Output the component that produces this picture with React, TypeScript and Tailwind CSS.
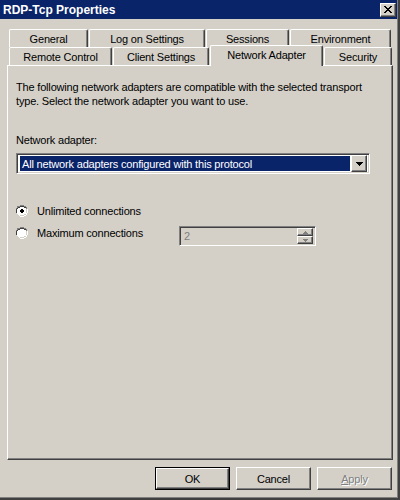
import React from 'react';

const raised =
  'border border-t-white border-l-white border-b-[#404040] border-r-[#404040] shadow-[inset_-1px_-1px_0_#808080,inset_1px_1px_0_#d4d0c8] bg-[#d4d0c8]';
const sunken =
  'border border-t-[#808080] border-l-[#808080] border-b-white border-r-white shadow-[inset_1px_1px_0_#404040,inset_-1px_-1px_0_#d4d0c8]';

function Tab({ label, w, selected = false }: { label: string; w: number; selected?: boolean }) {
  return (
    <div
      style={{ width: w }}
      className={`flex items-center justify-center bg-[#d4d0c8] border-t border-l border-white border-r border-r-[#404040] shadow-[inset_-1px_0_0_#808080] rounded-t-[2px] ${
        selected ? 'h-[21px] relative z-10 -mb-[1px] pb-[2px]' : 'h-[18px]'
      }`}
    >
      {label}
    </div>
  );
}

function Radio({ checked }: { checked?: boolean }) {
  return (
    <svg width="12" height="12" viewBox="0 0 12 12" shapeRendering="crispEdges">
      <circle cx="6" cy="6" r="5.5" fill="#ffffff" />
      <path d="M4 0h4v1h2v1h1v2h-1v-2h-2v-1h-4v1h-2v1h-1v4h-1v-4h1v-2h2z" fill="#808080" />
      <path d="M0 4h1v4h-1z" fill="#808080" />
      <path d="M4 1h4v1h2v1h-2v-1h-4v1h-2v1h-1v4h-1v-4h1v-1h1v-1h2z" fill="#404040" />
      <path d="M11 4h1v4h-1v2h-1v1h-2v1h-4v-1h4v-1h2v-2h1z" fill="#ffffff" />
      <path d="M10 4h1v4h-1v2h-2v1h-4v-1h4v-1h2z" fill="#d4d0c8" />
      {checked && <path d="M5 4h2v1h1v2h-1v1h-2v-1h-1v-2h1z" fill="#000000" />}
    </svg>
  );
}

export default function App() {
  return (
    <div className="w-[400px] h-[500px] bg-[#d4d0c8] border-r-2 border-b-2 border-r-[#404040] border-b-[#404040] shadow-[inset_-1px_-1px_0_#808080] flex flex-col text-[11px] tracking-[-0.18px] text-black font-['Liberation_Sans',Arial,sans-serif] leading-[14px] overflow-hidden">
      {/* Title bar */}
      <div className="h-[19px] bg-[#0a246a] flex items-center justify-between pl-[3px] pr-[1px] mr-[1px]">
        <span className="text-white font-bold text-[12px] tracking-normal">RDP-Tcp Properties</span>
        <div className={`w-[16px] h-[14px] flex items-center justify-center ${raised}`}>
          <svg width="8" height="7" viewBox="0 0 8 7" shapeRendering="crispEdges">
            <path d="M0 0h2v1h1v1h2v-1h1v-1h2v1h-1v1h-1v1h-1v1h1v1h1v1h1v1h-2v-1h-1v-1h-2v1h-1v1h-2v-1h1v-1h1v-1h1v-1h-1v-1h-1v-1h-1z" fill="#000" />
          </svg>
        </div>
      </div>

      {/* Tabs */}
      <div className="ml-[9px] mt-[10px] flex gap-[1px]">
        <Tab label="General" w={79} />
        <Tab label="Log on Settings" w={116} />
        <Tab label="Sessions" w={83} />
        <Tab label="Environment" w={101} />
      </div>
      <div className="ml-[9px] -mt-[3px] h-[21px] flex items-end gap-[1px] relative z-10">
        <Tab label="Remote Control" w={103} />
        <Tab label="Client Settings" w={96} />
        <Tab label="Network Adapter" w={113} selected />
        <Tab label="Security" w={68} />
      </div>

      {/* Panel */}
      <div className="ml-[7px] w-[386px] h-[395px] border border-t-white border-l-white border-r-[#404040] border-b-[#404040] shadow-[inset_-1px_-1px_0_#808080] pt-[14px] pl-[8px] flex flex-col">
        <p>
          The following network adapters are compatible with the selected transport
          <br />
          type. Select the network adapter you want to use.
        </p>
        <p className="mt-[25px]">Network adapter:</p>
        <div className={`mt-[6px] w-[354px] h-[21px] bg-white flex items-center p-[2px] ${sunken}`}>
          <div className="flex-1 h-[15px] mx-[1px] bg-[#0a246a] text-white flex items-center pl-[2px]">
            All network adapters configured with this protocol
          </div>
          <div className={`w-[16px] h-[17px] flex items-center justify-center ${raised}`}>
            <svg width="7" height="4" viewBox="0 0 7 4" shapeRendering="crispEdges">
              <path d="M0 0h7v1h-1v1h-1v1h-1v1h-1v-1h-1v-1h-1v-1h-1z" fill="#000" />
            </svg>
          </div>
        </div>

        <div className="mt-[30px] flex items-center gap-[9px] h-[14px]">
          <Radio checked />
          <span>Unlimited connections</span>
        </div>
        <div className="mt-[8px] flex items-start">
          <div className="flex items-center gap-[9px] h-[14px] w-[163px]">
            <Radio />
            <span>Maximum connections</span>
          </div>
          <div className={`w-[137px] h-[20px] flex items-center p-[2px] bg-[#d4d0c8] ${sunken}`}>
            <span className="flex-1 pl-[2px] text-[#808080]">2</span>
            <div className="flex flex-col w-[16px] h-[16px]">
              <div className={`h-[8px] flex items-center justify-center ${raised}`}>
                <svg width="5" height="3" viewBox="0 0 5 3" shapeRendering="crispEdges">
                  <path d="M2 0h1v1h1v1h1v1h-5v-1h1v-1h1z" fill="#808080" />
                </svg>
              </div>
              <div className={`h-[8px] flex items-center justify-center ${raised}`}>
                <svg width="5" height="3" viewBox="0 0 5 3" shapeRendering="crispEdges">
                  <path d="M0 0h5v1h-1v1h-1v1h-1v-1h-1v-1h-1z" fill="#808080" />
                </svg>
              </div>
            </div>
          </div>
        </div>
      </div>

      {/* Buttons */}
      <div className="mt-[7px] flex justify-end gap-[6px] pr-[6px]">
        <div className="w-[75px] h-[23px] border border-black">
          <div className={`w-full h-full flex items-center justify-center ${raised}`}>OK</div>
        </div>
        <div className={`w-[75px] h-[23px] flex items-center justify-center ${raised}`}>Cancel</div>
        <div className={`w-[75px] h-[23px] flex items-center justify-center text-[#808080] [text-shadow:1px_1px_0_#ffffff] ${raised}`}>
          <span>
            <span className="underline">A</span>pply
          </span>
        </div>
      </div>
    </div>
  );
}
